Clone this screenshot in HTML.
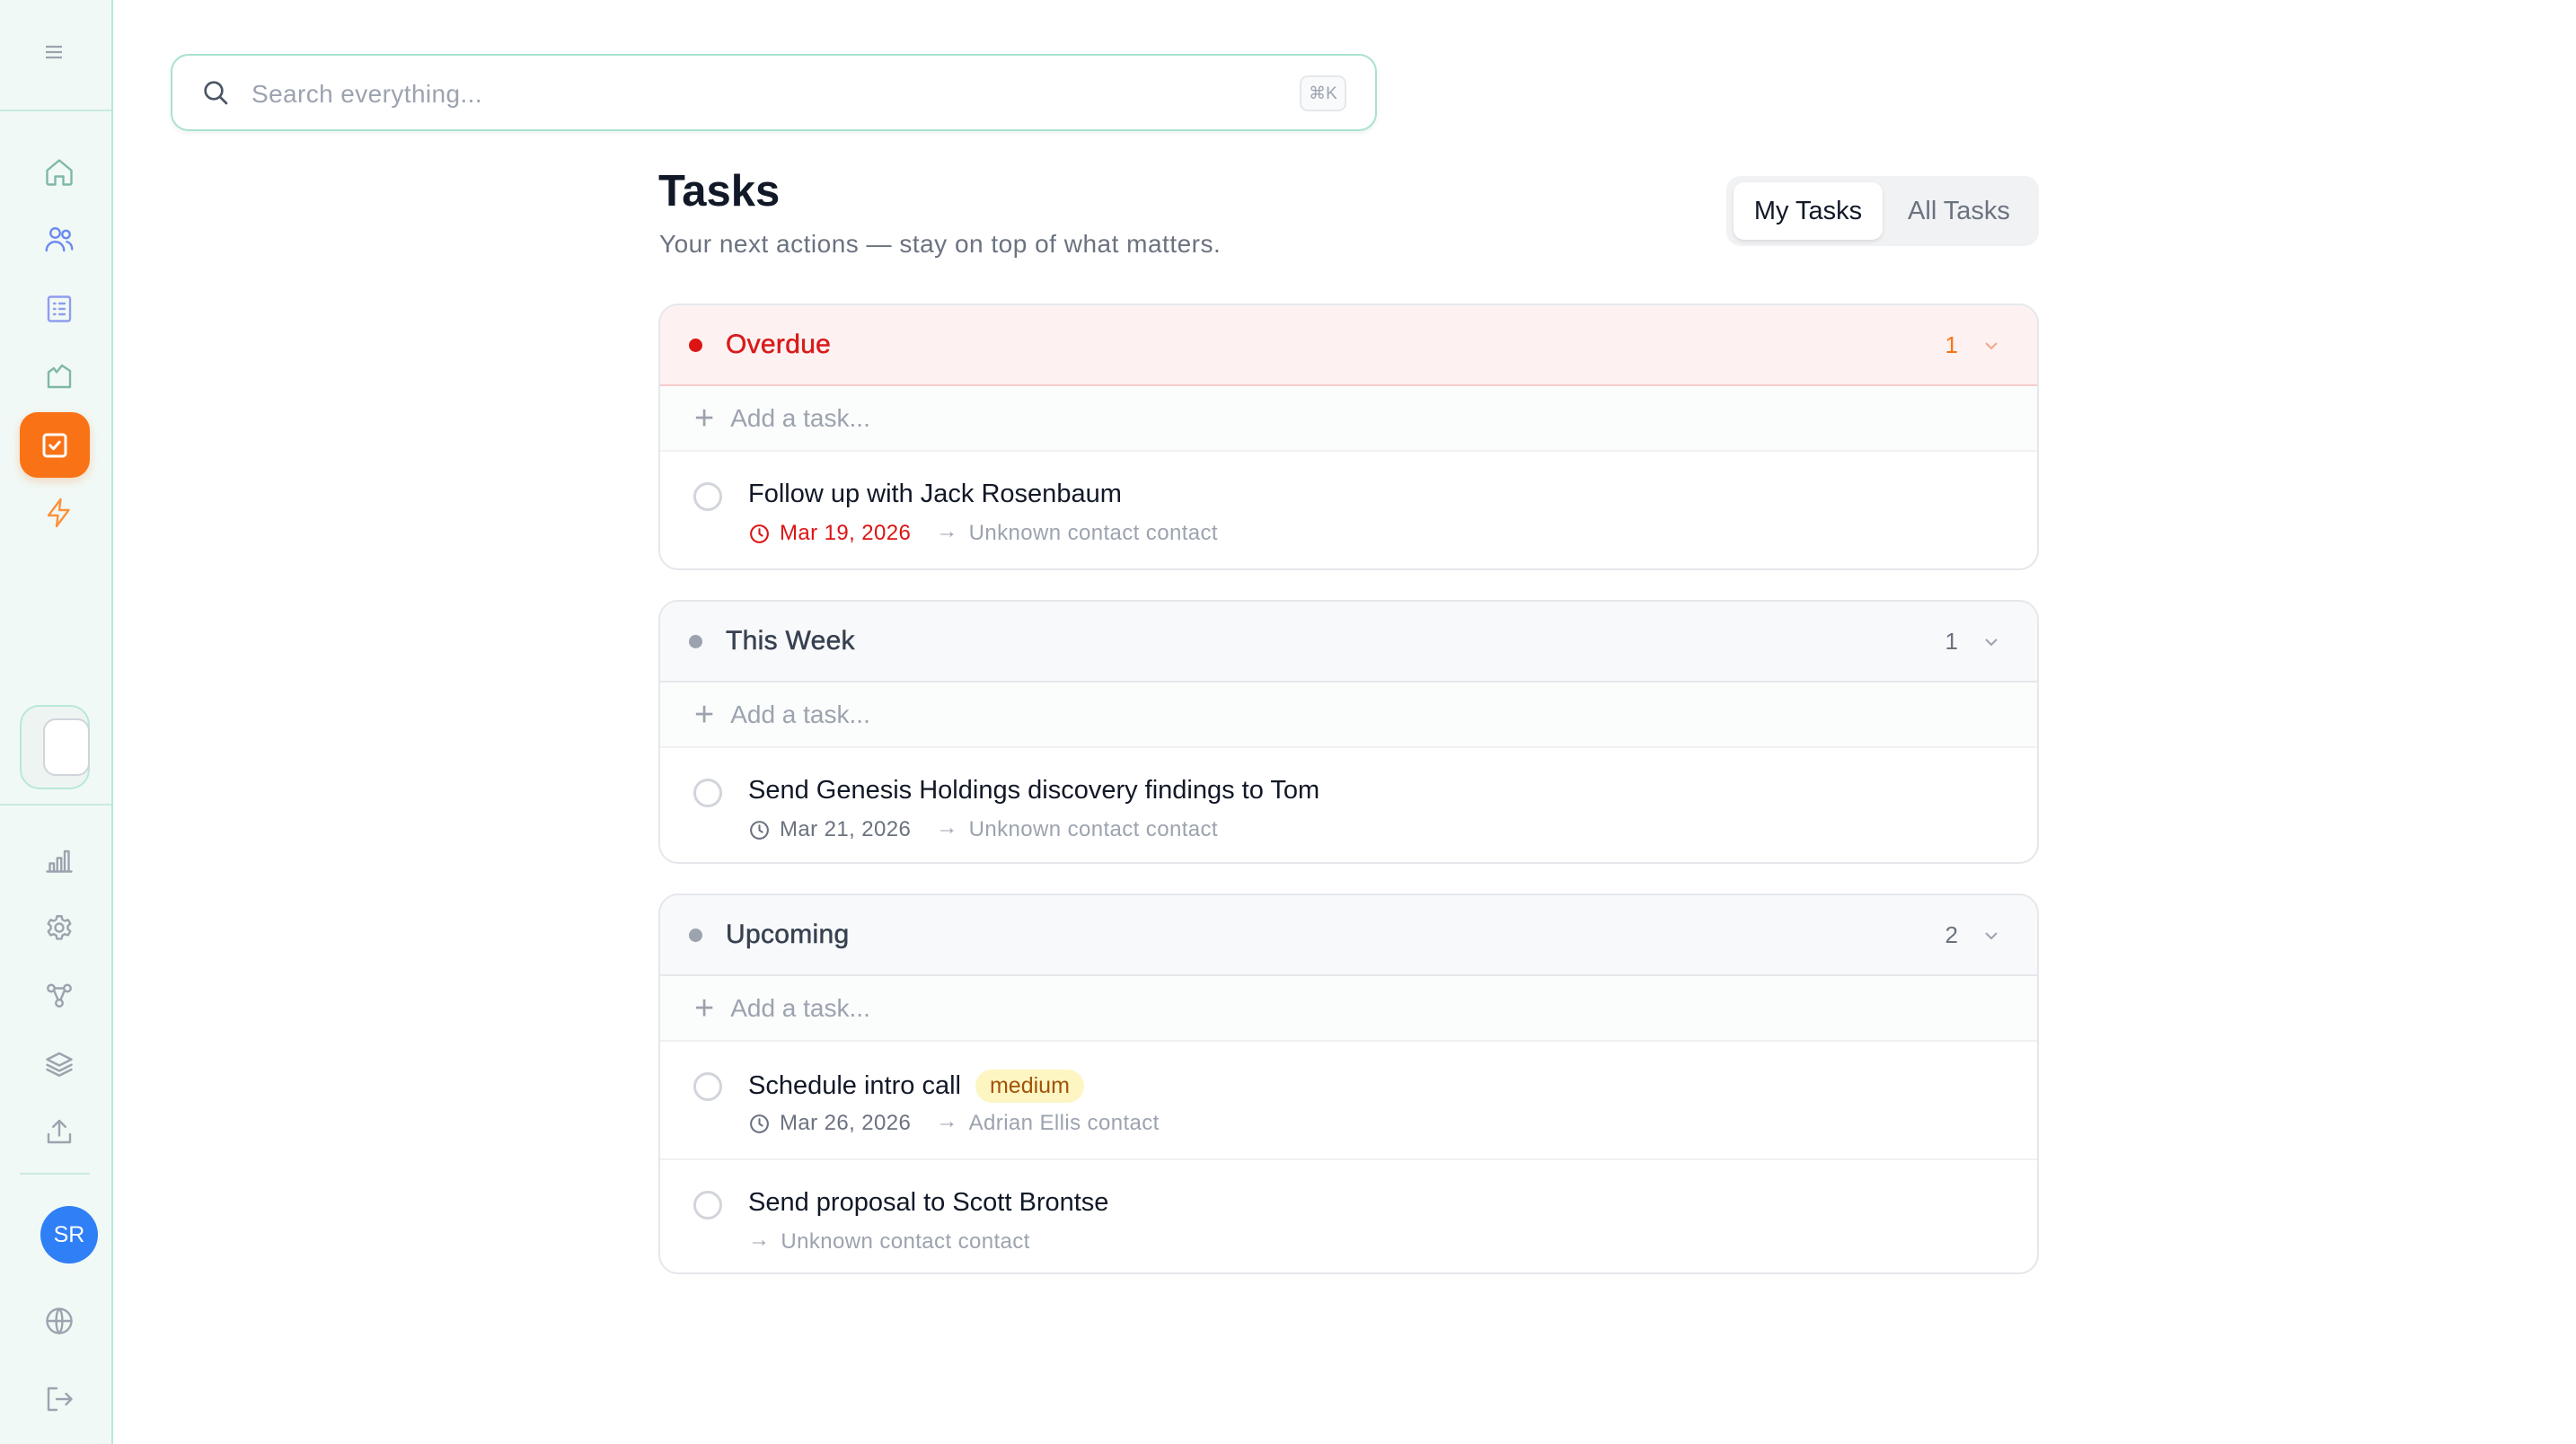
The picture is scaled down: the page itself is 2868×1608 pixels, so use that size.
<!DOCTYPE html>
<html><head><meta charset="utf-8"><style>
*{box-sizing:border-box;margin:0;padding:0}
body{width:2868px;height:1608px;background:#fff;font-family:"Liberation Sans",sans-serif;position:relative;overflow:hidden;color:#111827}
.abs{position:absolute}
.sb{left:0;top:0;width:126px;height:1608px;background:#f1f9f6;border-right:2px solid #b8e8d8}
.ic{position:absolute;left:48px;width:36px;height:36px}
.ic svg{width:36px;height:36px;fill:none;stroke-width:1.6;stroke-linecap:round;stroke-linejoin:round}
.card{position:absolute;left:733px;width:1537px;border:2px solid #e5e7eb;border-radius:22px;overflow:hidden;background:#fff}
.hd{height:90px;display:flex;align-items:center;padding-left:32px;border-bottom:2px solid #e5e7eb;background:#f8f9fa;position:relative}
.dot{width:15px;height:15px;border-radius:50%;background:#9ca3af;margin-right:26px}
.hl{font-size:30px;font-weight:400;color:#374151;letter-spacing:0.3px;-webkit-text-stroke:0.5px currentColor}
.cnt{position:absolute;right:88px;font-size:26px;color:#6b7280}
.chev{position:absolute;right:40px;top:34px;width:22px;height:22px}
.add{height:73px;display:flex;align-items:center;padding-left:38px;border-bottom:2px solid #f0f1f3;background:#fbfcfc;font-size:28px;color:#9ca3af}
.add span.p{font-size:38px;font-weight:300;margin-right:18px;color:#9ca3af;line-height:1}
.row{height:130px;position:relative}
.row+.row{border-top:2px solid #f0f1f3}
.cb{position:absolute;left:37px;top:34px;width:32px;height:32px;border:3px solid #d1d5db;border-radius:50%}
.tt{position:absolute;left:98px;top:31px;font-size:29px;color:#111827;font-weight:500;display:flex;align-items:center}
.meta{position:absolute;left:98px;top:77px;font-size:24px;color:#6b7280;display:flex;align-items:center;white-space:nowrap;letter-spacing:0.4px}
.meta .ct{color:#9ca3af}
.meta .ar{margin:0 12px 0 28px;color:#9ca3af;position:relative;top:-2px}
.meta svg{width:25px;height:25px;fill:none;stroke-width:2;stroke-linecap:round;margin-right:10px}
</style></head><body>

<div class="abs sb">
  <svg class="abs" style="left:49px;top:48px" width="22" height="20" viewBox="0 0 22 20"><path d="M2 4h18M2 10h18M2 16h18" stroke="#9ca3af" stroke-width="2.2"/></svg>
  <div class="abs" style="left:0;top:122px;width:124px;height:2px;background:#c9ebdf"></div>

  <div class="ic" style="top:174px"><svg viewBox="0 0 24 24" stroke="#7fb8a8"><path d="M3 10.5L12 3l9 7.5V20a1 1 0 0 1-1 1h-5v-6h-6v6H4a1 1 0 0 1-1-1z"/></svg></div>
  <div class="ic" style="top:249px"><svg viewBox="0 0 24 24" stroke="#6b8af0"><circle cx="9" cy="7" r="3.5"/><path d="M2.5 20c0-3.6 2.9-6.5 6.5-6.5s6.5 2.9 6.5 6.5"/><circle cx="17" cy="8" r="2.8"/><path d="M17.5 13.5c2.5.4 4 2.8 4 5.5"/></svg></div>
  <div class="ic" style="top:326px"><svg viewBox="0 0 24 24" stroke="#8f9df0"><rect x="4" y="3" width="16" height="18" rx="1.5"/><path d="M8 8h1M8 12h1M8 16h1M12 8h4M12 12h4M12 16h4"/></svg></div>
  <div class="ic" style="top:401px"><svg viewBox="0 0 24 24" stroke="#7fb8a8"><path d="M4 20V9l4-3 2 3 4-5 6 4v12z"/></svg></div>
  <div class="abs" style="left:22px;top:459px;width:78px;height:73px;border-radius:20px;background:#f97316;box-shadow:0 4px 10px rgba(249,115,22,.25)"></div>
  <div class="ic" style="top:478px;left:43px"><svg viewBox="0 0 24 24" stroke="#fff" style="stroke-width:2"><rect x="4" y="4" width="16" height="16" rx="2"/><path d="M8.5 12l2.5 2.5 4.5-5"/></svg></div>
  <div class="ic" style="top:553px"><svg viewBox="0 0 24 24" stroke="#fb923c"><path d="M13 2L4 14h7l-1 8 9-12h-7z"/></svg></div>

  <div class="abs" style="left:22px;top:785px;width:78px;height:94px;border-radius:22px;border:2px solid #b8e8d8;background:#eef4f2"></div>
  <div class="abs" style="left:48px;top:800px;width:52px;height:64px;border-radius:14px;border:2px solid #d1d5db;background:#fff"></div>
  <div class="abs" style="left:0;top:895px;width:124px;height:2px;background:#c9ebdf"></div>

  <div class="ic" style="top:939px"><svg viewBox="0 0 24 24" stroke="#9ca3af"><path d="M3 21h18M5 21v-6h3v6M10.5 21V11h3v10M16 21V6h3v15"/></svg></div>
  <div class="ic" style="top:1015px"><svg viewBox="0 0 24 24" stroke="#9ca3af"><circle cx="12" cy="12" r="3"/><path d="M10.3 3.5h3.4l.6 2.5 1.8 1 2.4-.8 1.7 2.9-1.9 1.7v2.2l1.9 1.7-1.7 2.9-2.4-.8-1.8 1-.6 2.5h-3.4l-.6-2.5-1.8-1-2.4.8-1.7-2.9 1.9-1.7v-2.2L3.8 9.1l1.7-2.9 2.4.8 1.8-1z"/></svg></div>
  <div class="ic" style="top:1090px"><svg viewBox="0 0 24 24" stroke="#9ca3af"><circle cx="6" cy="7" r="2.5"/><circle cx="18" cy="7" r="2.5"/><circle cx="12" cy="18" r="2.5"/><path d="M8 8.5l3 7M16 8.5l-3 7M8.5 7h7"/></svg></div>
  <div class="ic" style="top:1167px"><svg viewBox="0 0 24 24" stroke="#9ca3af"><path d="M12 4l9 4.5-9 4.5-9-4.5zM3 12.5l9 4.5 9-4.5M3 16l9 4.5 9-4.5"/></svg></div>
  <div class="ic" style="top:1242px"><svg viewBox="0 0 24 24" stroke="#9ca3af"><path d="M12 15V4M7.5 8.5L12 4l4.5 4.5M4 14v6h16v-6"/></svg></div>
  <div class="abs" style="left:22px;top:1306px;width:78px;height:2px;background:#c9ebdf"></div>
  <div class="abs" style="left:45px;top:1343px;width:64px;height:64px;border-radius:50%;background:#2f7ff7;color:#fff;font-size:25px;display:flex;align-items:center;justify-content:center">SR</div>
  <div class="ic" style="top:1453px"><svg viewBox="0 0 24 24" stroke="#9ca3af"><circle cx="12" cy="12" r="9"/><path d="M3 12h18M12 3c3 3 3 15 0 18M12 3c-3 3-3 15 0 18"/></svg></div>
  <div class="ic" style="top:1540px"><svg viewBox="0 0 24 24" stroke="#9ca3af"><path d="M10 4H4v16h6M10 12h11M17 8l4 4-4 4"/></svg></div>
</div>

<!-- search -->
<div class="abs" style="left:190px;top:60px;width:1343px;height:86px;border:2px solid #a8e2cf;border-radius:20px;background:#fff;box-shadow:0 3px 6px rgba(0,0,0,.05)">
  <svg class="abs" style="left:32px;top:25px" width="32" height="32" viewBox="0 0 24 24" fill="none" stroke="#4b5563" stroke-width="2" stroke-linecap="round"><circle cx="10.5" cy="10.5" r="7"/><path d="M16 16l5 5"/></svg>
  <div class="abs" style="left:88px;top:27px;font-size:28px;color:#9ca3af;letter-spacing:0.4px">Search everything...</div>
  <div class="abs" style="left:1255px;top:22px;width:52px;height:40px;border:2px solid #e5e7eb;border-radius:9px;background:#f9fafb;font-size:19px;color:#9ca3af;display:flex;align-items:center;justify-content:center">⌘K</div>
</div>

<div class="abs" style="left:733px;top:185px;font-size:49px;font-weight:700;color:#111827">Tasks</div>
<div class="abs" style="left:734px;top:256px;font-size:28px;color:#6b7280;letter-spacing:0.5px">Your next actions — stay on top of what matters.</div>

<div class="abs" style="left:1922px;top:196px;width:348px;height:78px;border-radius:16px;background:#f1f2f4">
  <div class="abs" style="left:8px;top:7px;width:166px;height:64px;border-radius:12px;background:#fff;box-shadow:0 2px 5px rgba(0,0,0,.1);font-size:29px;color:#111827;display:flex;align-items:center;justify-content:center">My Tasks</div>
  <div class="abs" style="left:174px;top:7px;width:170px;height:64px;font-size:29px;color:#6b7280;display:flex;align-items:center;justify-content:center">All Tasks</div>
</div>

<!-- card 1 -->
<div class="card" style="top:338px;height:297px">
  <div class="hd" style="background:#fdf1f1;border-bottom-color:#f8cccc"><div class="dot" style="background:#dc1414"></div><div class="hl" style="color:#d81b1b">Overdue</div><div class="cnt" style="color:#f97316">1</div>
  <svg class="chev" viewBox="0 0 22 22" fill="none" stroke="#f4a58a" stroke-width="2"><path d="M5 8l6 6 6-6"/></svg></div>
  <div class="add"><span class="p">+</span>Add a task...</div>
  <div class="row"><div class="cb"></div><div class="tt">Follow up with Jack Rosenbaum</div>
   <div class="meta"><svg viewBox="0 0 24 24" stroke="#dc1414"><circle cx="12" cy="12" r="9"/><path d="M12 7v5l3 2"/></svg><span style="color:#dc1414">Mar 19, 2026</span><span class="ar">→</span><span class="ct">Unknown contact contact</span></div></div>
</div>

<!-- card 2 -->
<div class="card" style="top:668px;height:294px">
  <div class="hd"><div class="dot"></div><div class="hl">This Week</div><div class="cnt">1</div>
  <svg class="chev" viewBox="0 0 22 22" fill="none" stroke="#9ca3af" stroke-width="2"><path d="M5 8l6 6 6-6"/></svg></div>
  <div class="add"><span class="p">+</span>Add a task...</div>
  <div class="row"><div class="cb"></div><div class="tt">Send Genesis Holdings discovery findings to Tom</div>
   <div class="meta"><svg viewBox="0 0 24 24" stroke="#6b7280"><circle cx="12" cy="12" r="9"/><path d="M12 7v5l3 2"/></svg><span>Mar 21, 2026</span><span class="ar">→</span><span class="ct">Unknown contact contact</span></div></div>
</div>

<!-- card 3 -->
<div class="card" style="top:995px;height:424px">
  <div class="hd"><div class="dot"></div><div class="hl">Upcoming</div><div class="cnt">2</div>
  <svg class="chev" viewBox="0 0 22 22" fill="none" stroke="#9ca3af" stroke-width="2"><path d="M5 8l6 6 6-6"/></svg></div>
  <div class="add"><span class="p">+</span>Add a task...</div>
  <div class="row"><div class="cb"></div><div class="tt">Schedule intro call<span style="margin-left:16px;background:#fdf6c3;color:#a1520a;font-size:25px;font-weight:400;padding:4px 16px;border-radius:20px">medium</span></div>
   <div class="meta"><svg viewBox="0 0 24 24" stroke="#6b7280"><circle cx="12" cy="12" r="9"/><path d="M12 7v5l3 2"/></svg><span>Mar 26, 2026</span><span class="ar">→</span><span class="ct">Adrian Ellis contact</span></div></div>
  <div class="row"><div class="cb"></div><div class="tt">Send proposal to Scott Brontse</div>
   <div class="meta"><span class="ar" style="margin-left:0">→</span><span class="ct">Unknown contact contact</span></div></div>
</div>

</body></html>
